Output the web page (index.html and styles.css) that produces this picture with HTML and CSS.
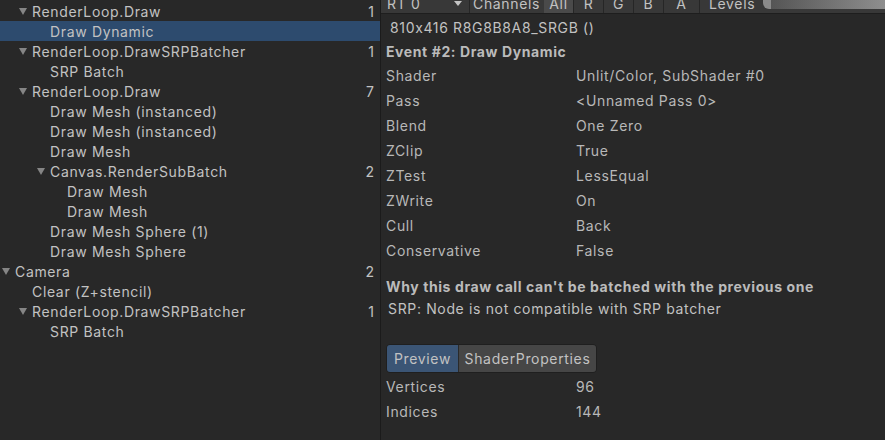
FILE: index.html
```
<!DOCTYPE html>
<html>
<head>
<meta charset="utf-8">
<link rel="stylesheet" href="styles.css">
</head>
<body>
<div class="app">
  <div class="tree">
    <div class="row l1"><span class="arrow"></span><span class="name">RenderLoop.Draw</span><span class="count">1</span></div>
    <div class="row l2 selected"><span class="arrow none"></span><span class="name">Draw Dynamic</span></div>
    <div class="row l1"><span class="arrow"></span><span class="name">RenderLoop.DrawSRPBatcher</span><span class="count">1</span></div>
    <div class="row l2"><span class="arrow none"></span><span class="name">SRP Batch</span></div>
    <div class="row l1"><span class="arrow"></span><span class="name">RenderLoop.Draw</span><span class="count">7</span></div>
    <div class="row l2"><span class="arrow none"></span><span class="name">Draw Mesh (instanced)</span></div>
    <div class="row l2"><span class="arrow none"></span><span class="name">Draw Mesh (instanced)</span></div>
    <div class="row l2"><span class="arrow none"></span><span class="name">Draw Mesh</span></div>
    <div class="row l2"><span class="arrow"></span><span class="name">Canvas.RenderSubBatch</span><span class="count">2</span></div>
    <div class="row l3"><span class="arrow none"></span><span class="name">Draw Mesh</span></div>
    <div class="row l3"><span class="arrow none"></span><span class="name">Draw Mesh</span></div>
    <div class="row l2"><span class="arrow none"></span><span class="name">Draw Mesh Sphere (1)</span></div>
    <div class="row l2"><span class="arrow none"></span><span class="name">Draw Mesh Sphere</span></div>
    <div class="row l0"><span class="arrow"></span><span class="name">Camera</span><span class="count">2</span></div>
    <div class="row l1"><span class="arrow none"></span><span class="name">Clear (Z+stencil)</span></div>
    <div class="row l1"><span class="arrow"></span><span class="name">RenderLoop.DrawSRPBatcher</span><span class="count">1</span></div>
    <div class="row l2"><span class="arrow none"></span><span class="name">SRP Batch</span></div>
  </div>
  <div class="detail">
    <div class="toolbar">
      <div class="tb-drop">RT 0<span class="caret"></span></div>
      <div class="tb-label channels">Channels</div>
      <div class="tb-btn active">All</div>
      <div class="tb-btn">R</div>
      <div class="tb-btn">G</div>
      <div class="tb-btn">B</div>
      <div class="tb-btn wide">A</div>
      <div class="tb-label levels">Levels</div>
      <div class="slider"><span class="knob"></span><span class="track"></span></div>
    </div>
    <div class="format">810x416 R8G8B8A8_SRGB ()</div>
    <div class="heading">Event #2: Draw Dynamic</div>
    <div class="props">
      <div class="prop"><span class="label">Shader</span><span class="value">Unlit/Color, SubShader #0</span></div>
      <div class="prop"><span class="label">Pass</span><span class="value">&lt;Unnamed Pass 0&gt;</span></div>
      <div class="prop"><span class="label">Blend</span><span class="value">One Zero</span></div>
      <div class="prop"><span class="label">ZClip</span><span class="value">True</span></div>
      <div class="prop"><span class="label">ZTest</span><span class="value">LessEqual</span></div>
      <div class="prop"><span class="label">ZWrite</span><span class="value">On</span></div>
      <div class="prop"><span class="label">Cull</span><span class="value">Back</span></div>
      <div class="prop"><span class="label">Conservative</span><span class="value">False</span></div>
    </div>
    <div class="heading why">Why this draw call can't be batched with the previous one</div>
    <div class="reason">SRP: Node is not compatible with SRP batcher</div>
    <div class="tabs">
      <div class="tab active">Preview</div>
      <div class="tab props-tab">ShaderProperties</div>
    </div>
    <div class="props stats">
      <div class="prop"><span class="label">Vertices</span><span class="value">96</span></div>
      <div class="prop"><span class="label">Indices</span><span class="value">144</span></div>
    </div>
  </div>
</div>
</body>
</html>
```

FILE: styles.css
```
html, body {
  margin: 0;
  padding: 0;
  background: #282828;
  width: 885px;
  height: 440px;
  overflow: hidden;
}
body {
  font-family: "Inter", "Noto Sans", sans-serif;
  font-size: 14px;
  letter-spacing: 0.65px;
  font-feature-settings: "calt" 0;
  color: #c2c2c2;
}
.app {
  display: flex;
  height: 440px;
}
.tree {
  width: 380px;
  flex: none;
  padding-top: 1px;
  border-right: 1px solid #1b1b1b;
  background: #282828;
}
.row {
  height: 20px;
  display: flex;
  align-items: center;
  padding-right: 6px;
}
.row.selected {
  background: #2d4b6e;
}
.l0 { padding-left: 0; }
.l1 { padding-left: 17px; }
.l2 { padding-left: 35px; }
.l3 { padding-left: 52px; }
.arrow {
  width: 15px;
  flex: none;
  display: flex;
  align-items: center;
}
.arrow::before {
  content: "";
  margin-left: 2px;
  width: 0;
  height: 0;
  border-left: 4px solid transparent;
  border-right: 4px solid transparent;
  border-top: 7px solid #858585;
}
.arrow.none::before {
  display: none;
}
.name {
  flex: 1;
  white-space: nowrap;
}
.count {
  flex: none;
  letter-spacing: 0;
}
.detail {
  flex: 1;
  display: flex;
  flex-direction: column;
  min-width: 0;
  overflow: hidden;
}
.toolbar {
  margin-top: -7px;
  height: 20px;
  flex: none;
  display: flex;
  align-items: stretch;
  background: #383838;
  border-bottom: 1px solid #1e1e1e;
  white-space: nowrap;
}
.tb-drop {
  width: 82px;
  padding-left: 6px;
  display: flex;
  align-items: center;
  position: relative;
  border-right: 1px solid #262626;
}
.caret {
  position: absolute;
  right: 7px;
  top: 8px;
  border-left: 4px solid transparent;
  border-right: 4px solid transparent;
  border-top: 5px solid #c4c4c4;
}
.tb-label {
  display: flex;
  align-items: center;
  box-sizing: border-box;
  flex: none;
}
.channels {
  width: 74px;
  padding-left: 3px;
}
.tb-btn {
  width: 29px;
  flex: none;
  display: flex;
  align-items: center;
  justify-content: center;
  border-right: 1px solid #262626;
}
.tb-btn.wide {
  width: 35px;
}
.tb-btn.active {
  background: #4a4a4a;
}
.levels {
  width: 63px;
  padding-left: 9px;
}
.slider {
  flex: 1;
  display: flex;
  align-items: center;
  margin-top: 1px;
  margin-bottom: 4px;
}
.knob {
  width: 8px;
  height: 15px;
  border-radius: 6px 0 0 6px;
  background: #8a8a8a;
}
.track {
  flex: 1;
  height: 15px;
  background: linear-gradient(to right, #555555, #8e8e8e);
}
.format {
  margin-top: 4px;
  height: 20px;
  line-height: 20px;
  padding-left: 9px;
}
.heading {
  margin-top: 4px;
  height: 20px;
  line-height: 20px;
  padding-left: 5px;
  font-weight: 700;
  letter-spacing: 0.6px;
  color: #bbbbbb;
}
.props {
  display: flex;
  flex-direction: column;
  margin-top: 1px;
}
.prop {
  height: 25px;
  display: flex;
  align-items: center;
  padding-left: 5px;
  color: #b8b8b8;
}
.label {
  width: 190px;
  flex: none;
}
.why {
  margin-top: 14px;
}
.reason {
  margin-top: 2px;
  height: 20px;
  line-height: 20px;
  padding-left: 7px;
}
.tabs {
  margin-top: 25px;
  margin-left: 5px;
  display: flex;
  align-self: flex-start;
  height: 27px;
  border: 1px solid #1f1f1f;
  border-radius: 4px;
  overflow: hidden;
}
.tab {
  display: flex;
  align-items: center;
  justify-content: center;
  width: 71px;
  background: #464646;
}
.tab.active {
  background: #3b5575;
  border-right: 1px solid #2a2a2a;
}
.tab.props-tab {
  width: 137px;
}
.stats {
  margin-top: 1px;
}
```
